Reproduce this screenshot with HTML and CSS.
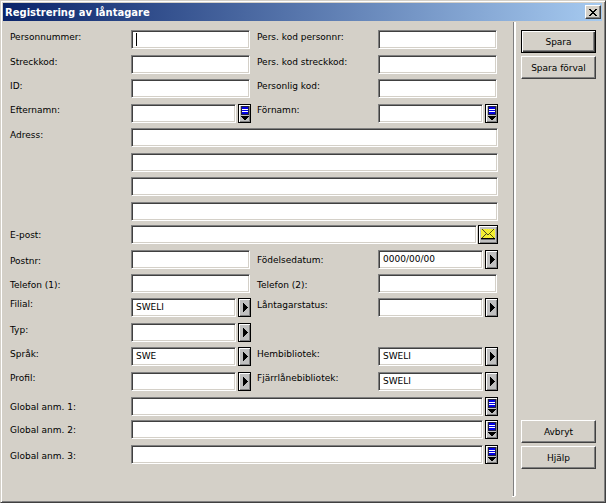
FILE: index.html
```html
<!DOCTYPE html>
<html lang="sv">
<head>
<meta charset="utf-8">
<title>Registrering av låntagare</title>
<link rel="stylesheet" href="styles.css">
</head>
<body>
<svg class="defs" width="0" height="0">
  <defs>
    <pattern id="stip" width="2" height="2" patternUnits="userSpaceOnUse"><path d="M0 0h2v2H0z" fill="#ffff20"/><path d="M0 0h1v1H0zM1 1h1v1H1z" fill="#e8e040"/></pattern>
  </defs>
  <symbol id="arrow" viewBox="0 0 10 17"><path d="M3 4h1v9H3zM4 5h1v7H4zM5 6h1v5H5zM6 7h1v3H6zM7 8h1v1H7z" fill="#000"/></symbol>
  <symbol id="list" viewBox="0 0 10 17"><path d="M1 1h8v9H1z" fill="#202040"/><path d="M2 2h6v7H2z" fill="#fff"/><path d="M2 2h6v2H2zM2 5h6v1H2zM2 7h6v2H2z" fill="#0000e6"/><path d="M1 11h8v1H1zM2 12h6v1H2zM3 13h4v1H3zM4 14h2v1H4z" fill="#000"/></symbol>
  <symbol id="mail" viewBox="0 0 14 11"><path d="M0 0h14v9H0z" fill="url(#stip)"/><path d="M0 9h14v1H0z" fill="#000"/><path d="M0 10h14v1H0z" fill="#707070"/><path d="M1 0h1v1H1zM2 1h1v1H2zM3 2h1v1H3zM4 3h1v1H4zM5 4h1v1H5zM6 5h2v1H6zM8 4h1v1H8zM9 3h1v1H9zM10 2h1v1h-1zM11 1h1v1h-1zM12 0h1v1h-1zM4 5h1v1H4zM3 6h1v1H3zM2 7h1v1H2zM1 8h1v1H1zM9 5h1v1H9zM10 6h1v1h-1zM11 7h1v1h-1zM12 8h1v1h-1z" fill="#50501c"/></symbol>
</svg>
<div class="window">
  <div class="titlebar">
    <span class="title">Registrering av låntagare</span>
    <span class="close"><svg width="8" height="7" viewBox="0 0 8 7"><path d="M0 0h2v1h1v1h2V1h1V0h2v1H7v1H6v1H5v1h1v1h1v1h1v1H6V6H5V5H3v1H2v1H0V6h1V5h1V4h1V3H2V2H1V1H0z" fill="#000"/></svg></span>
  </div>
  <div class="content">
    <div class="form">
      <div class="row r25"><label class="lbl">Personnummer:</label><div class="field plain"><div class="input"><span class="caret"></span></div></div><label class="lbl lbl2">Pers. kod personnr:</label><div class="field plain"><div class="input"></div></div></div>
      <div class="row r24"><label class="lbl">Streckkod:</label><div class="field plain"><div class="input"></div></div><label class="lbl lbl2">Pers. kod streckkod:</label><div class="field plain"><div class="input"></div></div></div>
      <div class="row r25"><label class="lbl">ID:</label><div class="field plain"><div class="input"></div></div><label class="lbl lbl2">Personlig kod:</label><div class="field plain"><div class="input"></div></div></div>
      <div class="row r24"><label class="lbl up1">Efternamn:</label><div class="field"><div class="input"></div><span class="btn"><svg width="10" height="17"><use href="#list"/></svg></span></div><label class="lbl lbl2 up1">Förnamn:</label><div class="field"><div class="input"></div><span class="btn"><svg width="10" height="17"><use href="#list"/></svg></span></div></div>
      <div class="row r25"><label class="lbl">Adress:</label><div class="field wide"><div class="input"></div></div></div>
      <div class="row r24"><span class="lbl"></span><div class="field wide"><div class="input"></div></div></div>
      <div class="row r25"><span class="lbl"></span><div class="field wide"><div class="input"></div></div></div>
      <div class="row r23"><span class="lbl"></span><div class="field wide"><div class="input"></div></div></div>
      <div class="row r25"><label class="lbl dn3">E-post:</label><div class="field wide"><div class="input"></div><span class="btn mailbtn"><svg width="14" height="11"><use href="#mail"/></svg></span></div></div>
      <div class="row r24"><label class="lbl dn4">Postnr:</label><div class="field plain"><div class="input"></div></div><label class="lbl lbl2 dn3">Födelsedatum:</label><div class="field"><div class="input">0000/00/00</div><span class="btn"><svg width="10" height="17"><use href="#arrow"/></svg></span></div></div>
      <div class="row r24"><label class="lbl dn4">Telefon (1):</label><div class="field plain"><div class="input"></div></div><label class="lbl lbl2 dn4">Telefon (2):</label><div class="field plain"><div class="input"></div></div></div>
      <div class="row r25"><label class="lbl up1">Filial:</label><div class="field"><div class="input">SWELI</div><span class="btn"><svg width="10" height="17"><use href="#arrow"/></svg></span></div><label class="lbl lbl2">Låntagarstatus:</label><div class="field"><div class="input"></div><span class="btn"><svg width="10" height="17"><use href="#arrow"/></svg></span></div></div>
      <div class="row r24"><label class="lbl">Typ:</label><div class="field"><div class="input"></div><span class="btn"><svg width="10" height="17"><use href="#arrow"/></svg></span></div></div>
      <div class="row r25"><label class="lbl">Språk:</label><div class="field"><div class="input">SWE</div><span class="btn"><svg width="10" height="17"><use href="#arrow"/></svg></span></div><label class="lbl lbl2">Hembibliotek:</label><div class="field"><div class="input">SWELI</div><span class="btn"><svg width="10" height="17"><use href="#arrow"/></svg></span></div></div>
      <div class="row r25"><label class="lbl up1">Profil:</label><div class="field"><div class="input"></div><span class="btn"><svg width="10" height="17"><use href="#arrow"/></svg></span></div><label class="lbl lbl2 up1">Fjärrlånebibliotek:</label><div class="field"><div class="input">SWELI</div><span class="btn"><svg width="10" height="17"><use href="#arrow"/></svg></span></div></div>
      <div class="row r23"><label class="lbl dn3">Global anm. 1:</label><div class="field wide"><div class="input"></div><span class="btn"><svg width="10" height="17"><use href="#list"/></svg></span></div></div>
      <div class="row r25"><label class="lbl dn3">Global anm. 2:</label><div class="field wide"><div class="input"></div><span class="btn"><svg width="10" height="17"><use href="#list"/></svg></span></div></div>
      <div class="row r24"><label class="lbl dn4">Global anm. 3:</label><div class="field wide"><div class="input"></div><span class="btn"><svg width="10" height="17"><use href="#list"/></svg></span></div></div>
    </div>
    <div class="separator"></div>
    <div class="side">
      <div class="group">
        <button class="push default">Spara</button>
        <button class="push">Spara förval</button>
      </div>
      <div class="group">
        <button class="push">Avbryt</button>
        <button class="push">Hjälp</button>
      </div>
    </div>
  </div>
</div>
</body>
</html>
```
FILE: styles.css
```css
* { box-sizing: border-box; }
html, body { margin: 0; padding: 0; }
body { width: 606px; height: 503px; overflow: hidden; background: #d4d0c8; font-family: "DejaVu Sans", sans-serif; font-size: 9px; color: #000; }
.defs { position: absolute; }
.window {
  width: 606px; height: 503px; display: flex; flex-direction: column;
  background: #d4d0c8; padding: 2px 3px 2px 2px;
  border-top: 1px solid #d4d0c8; border-left: 1px solid #d4d0c8;
  border-right: 1px solid #404040; border-bottom: 1px solid #404040;
  box-shadow: inset 1px 1px #fff, inset -1px -1px #808080;
}
.titlebar {
  height: 18px; flex: none; display: flex; align-items: center; justify-content: space-between;
  background: linear-gradient(to right, #0a246a, #a6caf0); padding: 0 1px 0 2px;
}
.title { color: #fff; font-weight: bold; font-size: 10px; }
.close {
  width: 16px; height: 14px; background: #d4d0c8; display: flex; align-items: center; justify-content: center;
  border: 1px solid; border-color: #fff #404040 #404040 #fff; box-shadow: inset -1px -1px #808080;
}
.content { flex: 1; display: flex; min-height: 0; }
.form { width: 510px; flex: none; padding: 9px 0 0 8px; display: flex; flex-direction: column; }
.row { display: grid; grid-template-columns: 120px 120px 127px 120px; flex: none; }
.r23 { height: 23px; }
.r24 { height: 24px; }
.r25 { height: 25px; }
.lbl { line-height: 14px; white-space: nowrap; margin-left: -1px; }
.lbl2 { padding-left: 7px; }
.up1 { margin-top: -1px; }
.dn3 { padding-top: 3px; }
.dn4 { padding-top: 4px; }
.field { display: flex; height: 19px; gap: 2px; }
.plain { padding-right: 1px; }
.wide { grid-column: 2 / 5; }
.input {
  flex: 1; min-width: 0; height: 19px; background: #fff; padding: 1px 0 0 4px; line-height: 15px; white-space: nowrap;
  border: 1px solid; border-color: #808080 #fff #fff #808080; box-shadow: inset 1px 1px #404040, inset -1px -1px #d4d0c8;
}
.caret { display: inline-block; width: 1px; height: 13px; margin-top: 1px; background: #000; vertical-align: top; }
.btn {
  flex: none; width: 13px; height: 19px; background: #c0c0c0; display: block;
  border: 1px solid #000; box-shadow: inset 1px 1px #fff, inset -1px -1px #808080;
  padding-left: 1px; overflow: hidden;
}
.btn svg { display: block; }
.mailbtn { width: 20px; margin-left: -1px; padding: 3px 0 0 2px; }
.separator { width: 3px; flex: none; margin-top: 1px; height: 474px; background: #808080; border-right: 2px solid #fff; position: relative; }
.separator::after { content: ""; position: absolute; left: -1px; bottom: -1px; width: 3px; height: 1px; background: #fff; }
.side { width: 75px; flex: none; margin: 9px 0 0 5px; height: 439px; display: flex; flex-direction: column; justify-content: space-between; }
.group { display: flex; flex-direction: column; gap: 3px; }
.push {
  width: 75px; height: 23px; padding: 0; font: inherit; color: #000; background: #d4d0c8;
  border: 1px solid; border-color: #fff #404040 #404040 #fff; box-shadow: inset -1px -1px #808080;
}
.default { border: 1px solid #000; box-shadow: inset 1px 1px #fff, inset -1px -1px #404040, inset -2px -2px #808080; }
```
